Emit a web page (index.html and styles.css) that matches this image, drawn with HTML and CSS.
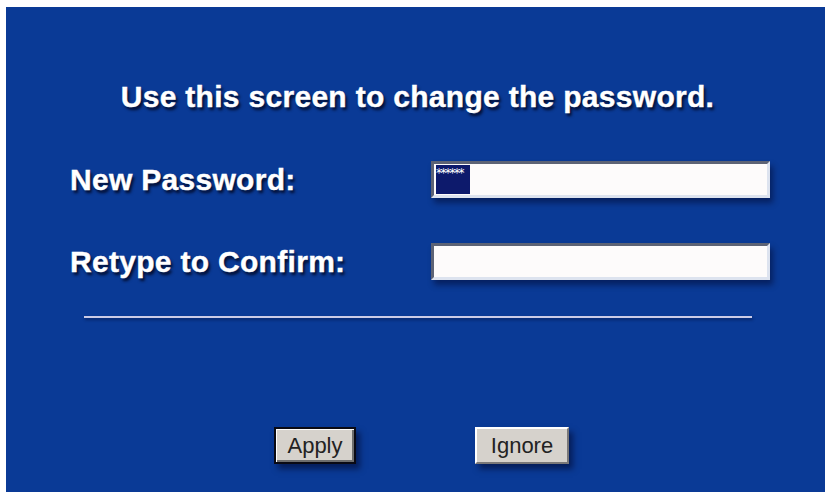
FILE: index.html
```html
<!DOCTYPE html>
<html lang="en">
<head>
<meta charset="utf-8">
<title>Change Password</title>
<link rel="stylesheet" href="styles.css">
</head>
<body>
<div class="panel">
  <h1 class="title">Use this screen to change the password.</h1>
  <div class="form">
    <div class="label">New Password:</div>
    <div class="field"><span class="sel">******</span></div>
    <div class="label">Retype to Confirm:</div>
    <div class="field"></div>
  </div>
  <div class="rule"></div>
  <div class="buttons">
    <button class="btn btn-default" type="button">Apply</button>
    <button class="btn" type="button">Ignore</button>
  </div>
</div>
</body>
</html>
```
FILE: styles.css
```css
html, body {
  margin: 0;
  padding: 0;
  background: #ffffff;
}
body {
  padding: 7px 0 0 6px;
  font-family: "Liberation Sans", Arial, sans-serif;
}
.panel {
  box-sizing: border-box;
  width: 819px;
  height: 485px;
  background: #0a3a96;
  padding-top: 74px;
}
.title {
  margin: 0;
  font-size: 30px;
  line-height: 32px;
  font-weight: bold;
  letter-spacing: 0.3px;
  color: #ffffff;
  text-align: center;
  padding-left: 4px;
  -webkit-text-stroke: 0.4px #ffffff;
  text-shadow: 2px 3px 3px rgba(0, 0, 20, 0.8);
}
.form {
  display: grid;
  grid-template-columns: 361px 339px;
  row-gap: 45px;
  align-items: center;
  padding-left: 64px;
  margin-top: 48px;
}
.label {
  font-size: 30px;
  line-height: 32px;
  font-weight: bold;
  letter-spacing: 0.3px;
  color: #ffffff;
  -webkit-text-stroke: 0.4px #ffffff;
  text-shadow: 2px 3px 3px rgba(0, 0, 20, 0.8);
}
.field {
  box-sizing: border-box;
  height: 37px;
  background: #fdfbfb;
  border-style: solid;
  border-width: 3px;
  border-color: #5d6375 #dde3ef #dde3ef #5d6375;
  box-shadow: 3px 5px 6px rgba(0, 0, 30, 0.45);
  padding: 1px 2px;
  display: flex;
}
.sel {
  display: block;
  width: 34px;
  height: 29px;
  background: #0d1a6c;
  color: #ffffff;
  font-family: "DejaVu Sans", sans-serif;
  font-size: 12px;
  line-height: 16px;
  letter-spacing: -1.5px;
  overflow: hidden;
  white-space: nowrap;
}
.rule {
  margin: 36px 0 0 78px;
  width: 668px;
  height: 2px;
  background: #cbcbe6;
  box-shadow: 1px 2px 3px rgba(0, 0, 30, 0.4);
}
.buttons {
  display: flex;
  justify-content: center;
  gap: 119px;
  margin-top: 109px;
  padding-left: 12px;
}
.btn {
  box-sizing: border-box;
  height: 37px;
  font-family: "Liberation Sans", Arial, sans-serif;
  font-size: 22px;
  color: #222222;
  background: #d6d2cc;
  border-style: solid;
  border-width: 2px;
  border-color: #ffffff #7a7878 #7a7878 #ffffff;
  box-shadow: 4px 5px 6px rgba(0, 0, 30, 0.5);
  padding: 0;
  width: 94px;
}
.btn-default {
  width: 82px;
  border: 2px solid #0a0a14;
  box-shadow: inset 1px 1px 0 #ffffff, inset -2px -2px 0 #6e6e6e, 4px 5px 6px rgba(0, 0, 30, 0.5);
}
```
